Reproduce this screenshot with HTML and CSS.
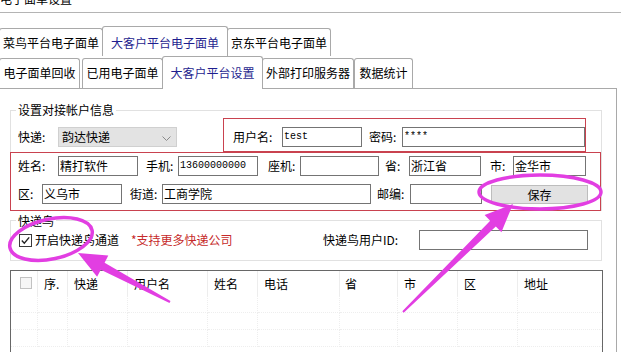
FILE: index.html
```html
<!DOCTYPE html>
<html lang="zh-CN">
<head>
<meta charset="utf-8">
<title>电子面单设置</title>
<link rel="stylesheet" href="styles.css">
</head>
<body>
<div class="titlebar"><span class="title">电子面单设置</span></div>

<div class="tabs">
  <div class="tabrow row1">
    <div class="tab t-cainiao">菜鸟平台电子面单</div>
    <div class="tab t-dakehu active">大客户平台电子面单</div>
    <div class="tab t-jd">京东平台电子面单</div>
  </div>
  <div class="tabrow row2">
    <div class="tab t-huishou">电子面单回收</div>
    <div class="tab t-used">已用电子面单</div>
    <div class="tab t-set active">大客户平台设置</div>
    <div class="tab t-ext">外部打印服务器</div>
    <div class="tab t-stat">数据统计</div>
  </div>
</div>

<div class="panel">
  <div class="group g1">
    <div class="legend">设置对接帐户信息</div>
    <div class="row-a">
      <span class="lbl lbl-kd">快递:</span>
      <div class="select"><span>韵达快递</span><svg class="chev" width="9" height="5" viewBox="0 0 9 5"><polyline points="0.5,0.5 4.5,4.5 8.5,0.5" fill="none" stroke="#8a8a8a" stroke-width="1"/></svg></div>
      <div class="redbox rb1">
        <span class="lbl w49">用户名:</span>
        <div class="input mono w80">test</div>
        <span class="lbl ml7 w33">密码:</span>
        <div class="input mono w183">****</div>
      </div>
    </div>
    <div class="redbox rb2">
      <div class="frow">
        <span class="lbl ml7 w40">姓名:</span>
        <div class="input w80">精打软件</div>
        <span class="lbl ml8 w32">手机:</span>
        <div class="input mono w80">13600000000</div>
        <span class="lbl ml10 w32">座机:</span>
        <div class="input w79"></div>
        <span class="lbl ml6 w24">省:</span>
        <div class="input w72">浙江省</div>
        <span class="lbl ml9 w23">市:</span>
        <div class="input w73">金华市</div>
      </div>
      <div class="frow">
        <span class="lbl ml7 w24">区:</span>
        <div class="input w80">义乌市</div>
        <span class="lbl ml8 w32">街道:</span>
        <div class="input w209">工商学院</div>
        <span class="lbl ml6 w33">邮编:</span>
        <div class="input w72"></div>
        <div class="btn">保存</div>
      </div>
    </div>
  </div>

  <div class="group g2">
    <div class="legend">快递鸟</div>
    <div class="crow">
      <svg class="cb" width="13" height="13" viewBox="0 0 13 13"><rect x="0.5" y="0.5" width="12" height="12" fill="#fff" stroke="#3a3a3a"/><polyline points="2.8,6.6 5.3,9.2 10.2,3.4" fill="none" stroke="#222" stroke-width="1.4"/></svg>
      <span class="lbl ml3 w84">开启快递鸟通道</span>
      <span class="lbl ml12 w102 red">*支持更多快递公司</span>
      <span class="lbl ml90 w96">快递鸟用户ID:</span>
      <div class="input w169"></div>
    </div>
  </div>

  <div class="grid">
    <div class="th th-cb"><svg width="12" height="12" viewBox="0 0 12 12"><rect x="0.5" y="0.5" width="11" height="11" fill="#f6f6f6" stroke="#c2c2c2"/></svg></div>
    <div class="th">序.</div>
    <div class="th">快递</div>
    <div class="th">用户名</div>
    <div class="th">姓名</div>
    <div class="th">电话</div>
    <div class="th th-sheng">省</div>
    <div class="th">市</div>
    <div class="th">区</div>
    <div class="th last">地址</div>
    <div class="td"></div><div class="td"></div><div class="td"></div><div class="td"></div><div class="td"></div><div class="td"></div><div class="td"></div><div class="td"></div><div class="td"></div><div class="td last"></div>
    <div class="td"></div><div class="td"></div><div class="td"></div><div class="td"></div><div class="td"></div><div class="td"></div><div class="td"></div><div class="td"></div><div class="td"></div><div class="td last"></div>
    <div class="td"></div><div class="td"></div><div class="td"></div><div class="td"></div><div class="td"></div><div class="td"></div><div class="td"></div><div class="td"></div><div class="td"></div><div class="td last"></div>
  </div>
</div>

<svg class="annot" width="621" height="352" viewBox="0 0 621 352">
  <ellipse cx="51" cy="239" rx="42" ry="20" transform="rotate(-12 51 239)" fill="none" stroke="#e23ee2" stroke-width="3.5"/>
  <ellipse cx="540" cy="192" rx="61" ry="17" fill="none" stroke="#e23ee2" stroke-width="3.5"/>
  <polygon fill="#e23ee2" points="78,253 108.3,255.6 104.6,262.7 170.5,301.1 169.5,302.9 100.8,269.7 97.1,276.8"/>
  <polygon fill="#e23ee2" points="513,204 501.4,232.2 495.8,226.5 403.7,312.7 402.3,311.3 490.2,220.7 484.6,215"/>
</svg>
</body>
</html>
```

FILE: styles.css
```css
* { box-sizing: border-box; }

body {
  margin: 0;
  width: 621px;
  height: 352px;
  overflow: hidden;
  position: relative;
  background: #fff;
  color: #000;
  font-family: "Noto Sans CJK SC", "Noto Sans", sans-serif;
  font-size: 12px;
}

.titlebar {
  height: 13px;
  border-bottom: 1px solid #b4b4b4;
  overflow: hidden;
}
.title {
  display: block;
  margin-top: -8px;
  line-height: 14px;
}

/* tabs */
.tabs { margin-top: 13px; }
.tabrow {
  display: flex;
  align-items: flex-end;
  margin-left: -1px;
}
.row1 { height: 30px; }
.row2 { height: 32px; }

.tab {
  flex: none;
  border: 1px solid #a9a9a9;
  border-bottom: none;
  border-radius: 3px 3px 0 0;
  background: #fff;
  text-align: center;
  line-height: 14px;
  padding-top: 7px;
  white-space: nowrap;
}
.row1 .tab { height: 28px; }
.row2 .tab { height: 30px; }
.tab.active { color: #1f1f8f; padding-top: 9px; }
.row1 .tab.active { height: 30px; }
.row2 .tab.active {
  height: 33px;
  margin-bottom: -1px;
  position: relative;
  z-index: 1;
}

.t-cainiao { width: 104px; }
.t-dakehu { width: 126px; margin-left: -1px; }
.t-jd { width: 104px; margin-left: -1px; }
.t-huishou { width: 81px; }
.t-used { width: 81px; margin-left: 2px; }
.t-set { width: 101px; margin-left: -1px; }
.t-ext { width: 92px; margin-left: -1px; }
.t-stat { width: 59px; }

/* panel */
.panel {
  margin-left: -1px;
  width: 618px;
  height: 264px;
  border: 1px solid #a9a9a9;
  border-bottom: none;
  overflow: hidden;
}

.group {
  width: 592px;
  margin-left: 10px;
  border: 1px solid #e1e1e1;
}
.g1 { margin-top: 21px; }
.g2 { margin-top: 9px; padding-bottom: 10px; }

.legend {
  width: fit-content;
  margin: -8px 0 0 5px;
  padding: 0 2px;
  background: #fff;
  line-height: 14px;
}
.g2 .legend { margin-top: -7px; }

.lbl {
  flex: none;
  line-height: 20px;
  white-space: nowrap;
}

.row-a {
  display: flex;
  align-items: flex-start;
  height: 34px;
  margin-top: 1px;
}
.lbl-kd { margin: 9px 0 0 7px; width: 40px; }

.select {
  flex: none;
  width: 119px;
  height: 20px;
  margin-top: 9px;
  background: #e3e3e3;
  border: 1px solid #d0d0d0;
  display: flex;
  align-items: center;
  justify-content: space-between;
  padding: 0 5px 0 3px;
  line-height: 18px;
}
.chev { margin-top: 2px; }

.redbox { border: 1px solid #c9424f; }
.rb1 {
  flex: none;
  margin-left: 46px;
  width: 363px;
  height: 34px;
  padding: 8px 0 0 9px;
  display: flex;
  align-items: flex-start;
}
.rb2 {
  width: 591px;
  height: 59px;
  margin: 0 0 -1px -1px;
  padding-top: 3px;
}

.frow, .crow {
  display: flex;
  align-items: center;
  height: 20px;
}
.frow + .frow { margin-top: 8px; }
.crow { margin-top: 2px; }

.input {
  flex: none;
  height: 20px;
  border: 1px solid #747474;
  background: #fff;
  line-height: 18px;
  padding-left: 1px;
  white-space: nowrap;
  overflow: hidden;
}
.mono {
  font-family: "Liberation Mono", "DejaVu Sans Mono", monospace;
  font-size: 10px;
}

.btn {
  flex: none;
  width: 97px;
  height: 19px;
  margin-left: 9px;
  background: #e2e2e2;
  border: 1px solid #bdbdbd;
  text-align: center;
  line-height: 17px;
}

.cb { flex: none; margin-left: 8px; }
.red { color: #c62a2a; }

/* widths / margins */
.w23 { width: 23px; } .w24 { width: 24px; } .w32 { width: 32px; }
.w33 { width: 33px; } .w40 { width: 40px; } .w49 { width: 49px; }
.w72 { width: 72px; } .w73 { width: 73px; } .w79 { width: 79px; }
.w80 { width: 80px; } .w84 { width: 84px; } .w96 { width: 96px; }
.w102 { width: 102px; } .w169 { width: 169px; } .w183 { width: 183px; }
.w209 { width: 209px; }
.ml3 { margin-left: 3px; } .ml6 { margin-left: 6px; } .ml7 { margin-left: 7px; }
.ml8 { margin-left: 8px; } .ml9 { margin-left: 9px; } .ml10 { margin-left: 10px; }
.ml12 { margin-left: 12px; } .ml90 { margin-left: 90px; }

/* list */
.grid {
  width: 593px;
  height: 110px;
  margin: 9px 0 0 10px;
  border: 1px solid #676767;
  display: grid;
  grid-template-columns: 27px 30px 60px 80px 50px 82px 58px 60px 60px 1fr;
  grid-template-rows: 25px 17px 17px 17px;
  align-content: start;
}
.th {
  line-height: 25px;
  padding-left: 6px;
  border-right: 1px solid #ededed;
  white-space: nowrap;
}
.th-cb { padding: 6px 0 0 9px; line-height: 0; }
.th-sheng { padding-left: 5px; }
.td {
  border-right: 1px dotted #eeeeee;
  border-bottom: 1px dotted #eeeeee;
}
.th.last, .td.last { border-right: none; }

.annot {
  position: absolute;
  left: 0;
  top: 0;
  pointer-events: none;
}
```
